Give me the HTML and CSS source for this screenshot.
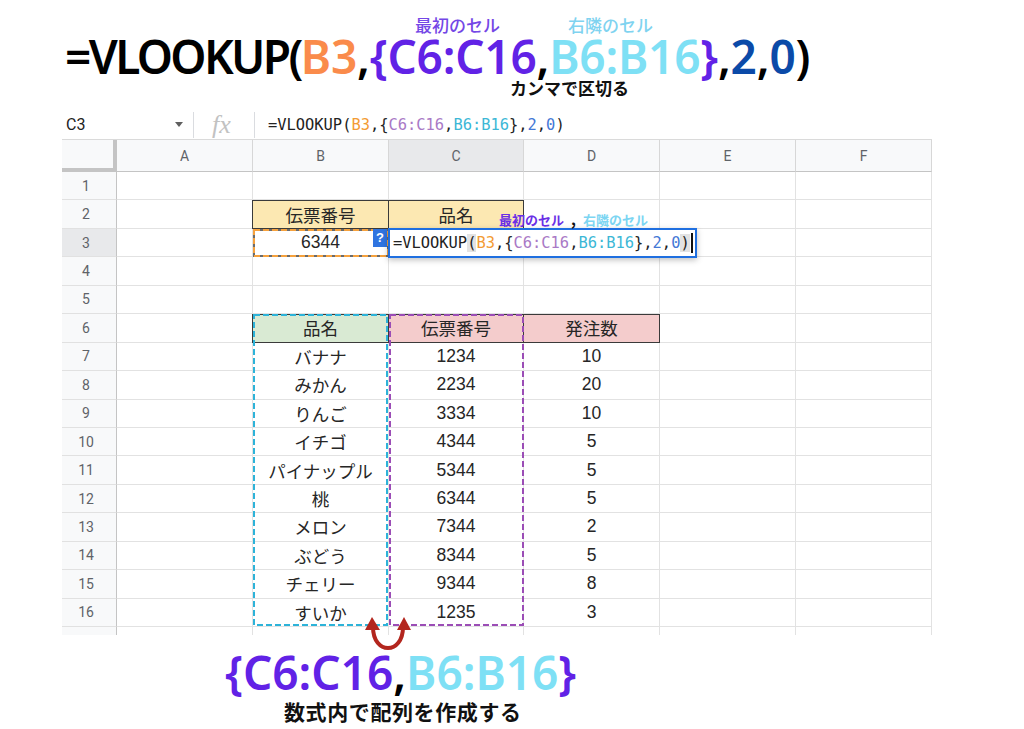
FILE: index.html
```html
<!DOCTYPE html>
<html lang="ja">
<head>
<meta charset="utf-8">
<title>VLOOKUP 配列</title>
<link rel="stylesheet" href="styles.css">
</head>
<body>
<div class="page">
  <header class="hero">
    <div class="notes-top">
      <span class="note note-first">最初のセル</span>
      <span class="note note-right">右隣のセル</span>
    </div>
    <div class="big-formula"><span class="fn">=VLOOKUP(</span><span class="or">B3</span>,<span class="pu">{C6:C16</span>,<span class="cy">B6:B16</span><span class="pu">}</span>,<span class="db">2</span>,<span class="db">0</span>)</div>
    <div class="note note-comma">カンマで区切る</div>
  </header>

  <section class="sheet">
    <div class="fbar">
      <div class="namebox"><span>C3</span><span class="caret"></span></div>
      <div class="vdiv"></div>
      <div class="fx">fx</div>
      <div class="vdiv"></div>
      <div class="ftext">=VLOOKUP(<span class="f-or">B3</span>,{<span class="f-pu">C6:C16</span>,<span class="f-cy">B6:B16</span>},<span class="f-bl">2</span>,<span class="f-bl">0</span>)</div>
    </div>

    <div class="row hrow">
      <div class="corner"></div>
      <div class="ch">A</div><div class="ch">B</div><div class="ch sel">C</div><div class="ch">D</div><div class="ch">E</div><div class="ch">F</div>
    </div>

    <div class="body">
      <div class="row"><div class="rh">1</div><div class="c"></div><div class="c"></div><div class="c"></div><div class="c"></div><div class="c"></div><div class="c"></div></div>
      <div class="row"><div class="rh">2</div><div class="c"></div><div class="c yl">伝票番号</div><div class="c yl">品名</div><div class="c"></div><div class="c"></div><div class="c"></div></div>
      <div class="row"><div class="rh sel">3</div><div class="c"></div><div class="c">6344</div><div class="c"></div><div class="c"></div><div class="c"></div><div class="c"></div></div>
      <div class="row"><div class="rh">4</div><div class="c"></div><div class="c"></div><div class="c"></div><div class="c"></div><div class="c"></div><div class="c"></div></div>
      <div class="row"><div class="rh">5</div><div class="c"></div><div class="c"></div><div class="c"></div><div class="c"></div><div class="c"></div><div class="c"></div></div>
      <div class="row"><div class="rh">6</div><div class="c"></div><div class="c gr">品名</div><div class="c rd">伝票番号</div><div class="c rd">発注数</div><div class="c"></div><div class="c"></div></div>
      <div class="row"><div class="rh">7</div><div class="c"></div><div class="c">バナナ</div><div class="c">1234</div><div class="c">10</div><div class="c"></div><div class="c"></div></div>
      <div class="row"><div class="rh">8</div><div class="c"></div><div class="c">みかん</div><div class="c">2234</div><div class="c">20</div><div class="c"></div><div class="c"></div></div>
      <div class="row"><div class="rh">9</div><div class="c"></div><div class="c">りんご</div><div class="c">3334</div><div class="c">10</div><div class="c"></div><div class="c"></div></div>
      <div class="row"><div class="rh">10</div><div class="c"></div><div class="c">イチゴ</div><div class="c">4344</div><div class="c">5</div><div class="c"></div><div class="c"></div></div>
      <div class="row"><div class="rh">11</div><div class="c"></div><div class="c">パイナップル</div><div class="c">5344</div><div class="c">5</div><div class="c"></div><div class="c"></div></div>
      <div class="row"><div class="rh">12</div><div class="c"></div><div class="c">桃</div><div class="c">6344</div><div class="c">5</div><div class="c"></div><div class="c"></div></div>
      <div class="row"><div class="rh">13</div><div class="c"></div><div class="c">メロン</div><div class="c">7344</div><div class="c">2</div><div class="c"></div><div class="c"></div></div>
      <div class="row"><div class="rh">14</div><div class="c"></div><div class="c">ぶどう</div><div class="c">8344</div><div class="c">5</div><div class="c"></div><div class="c"></div></div>
      <div class="row"><div class="rh">15</div><div class="c"></div><div class="c">チェリー</div><div class="c">9344</div><div class="c">8</div><div class="c"></div><div class="c"></div></div>
      <div class="row"><div class="rh">16</div><div class="c"></div><div class="c">すいか</div><div class="c">1235</div><div class="c">3</div><div class="c"></div><div class="c"></div></div>
      <div class="row"><div class="rh">17</div><div class="c"></div><div class="c"></div><div class="c"></div><div class="c"></div><div class="c"></div><div class="c"></div></div>

      <svg class="marks" width="870" height="463" viewBox="0 0 870 463">
        <rect x="190.5" y="28.5" width="271" height="28" fill="none" stroke="#3a3a3a" stroke-width="1"/>
        <line x1="326.5" y1="28.5" x2="326.5" y2="56.5" stroke="#3a3a3a" stroke-width="1"/>
        <rect x="190.5" y="142.5" width="407" height="28" fill="none" stroke="#3a3a3a" stroke-width="1"/>
        <line x1="326.5" y1="142.5" x2="326.5" y2="170.5" stroke="#3a3a3a" stroke-width="1"/>
        <line x1="461.5" y1="142.5" x2="461.5" y2="170.5" stroke="#3a3a3a" stroke-width="1"/>
        <rect x="192" y="58" width="134" height="26" fill="none" stroke="#6b6b6b" stroke-width="2"/>
        <rect x="192" y="58" width="134" height="26" fill="none" stroke="#f5a13d" stroke-width="2" stroke-dasharray="6 3"/>
        <rect x="192" y="143" width="133" height="310" fill="none" stroke="#2db3d9" stroke-width="2" stroke-dasharray="6 3"/>
        <rect x="328" y="143" width="133" height="310" fill="none" stroke="#9b4db6" stroke-width="2" stroke-dasharray="6 3"/>
      </svg>

      <div class="hint">?</div>
      <div class="editor">=VLOOKUP<span class="paren">(</span><span class="f-or">B3</span>,{<span class="f-pu">C6:C16</span>,<span class="f-cy">B6:B16</span>},<span class="f-bl">2</span>,<span class="f-bl">0</span><span class="paren">)</span><span class="cursor"></span></div>
      <div class="cell-notes"><span class="cn-first">最初のセル</span><span class="cn-comma">,</span><span class="cn-right">右隣のセル</span></div>
    </div>
  </section>

  <svg class="swap-arrow" width="52" height="44" viewBox="0 0 52 44">
    <path d="M11 15 C 11 43, 41 43, 41 15" fill="none" stroke="#b3261e" stroke-width="4"/>
    <polygon points="10,5 3,18 18,18" fill="#b3261e"/>
    <polygon points="42,5 35,18 49,18" fill="#b3261e"/>
  </svg>

  <footer class="foot">
    <div class="foot-formula"><span class="pu">{C6:C16</span>,<span class="cy">B6:B16</span><span class="pu">}</span></div>
    <div class="foot-note">数式内で配列を作成する</div>
  </footer>
</div>
</body>
</html>
```

FILE: styles.css
```css
* { box-sizing: border-box; }
html, body { margin: 0; padding: 0; background: #ffffff; }
body {
  font-family: "Liberation Sans", "Noto Sans CJK JP", sans-serif;
  color: #262626;
}
.page {
  position: relative;
  width: 1024px;
  height: 729px;
  overflow: hidden;
}

/* ---------- title ---------- */
.hero {
  height: 110px;
  padding-top: 14px;
}
.notes-top {
  display: flex;
  gap: 68px;
  height: 22px;
  padding-left: 415px;
}
.note {
  font-family: "Noto Sans CJK JP", sans-serif;
  font-size: 17px;
  line-height: 22px;
  font-weight: 500;
  white-space: nowrap;
}
.note-first { color: #7447e6; }
.note-right { color: #7fd3f0; }
.big-formula {
  margin-left: 65px;
  font-family: "Noto Sans", "Noto Sans CJK JP", sans-serif;
  font-size: 46px;
  line-height: 40px;
  font-weight: 600;
  letter-spacing: -0.2px;
  color: #000;
  white-space: nowrap;
}
.fn { letter-spacing: -2.6px; }
.note-comma {
  margin: 1px 0 0 510px;
  font-weight: 700;
  color: #111;
}
.or { color: #fa8b4b; }
.pu { color: #6122e6; }
.cy { color: #7ee0f5; }
.db { color: #0b4aa8; }

/* ---------- sheet ---------- */
.sheet {
  margin-left: 62px;
  width: 870px;
  height: 525px;
  overflow: hidden;
}
.fbar {
  height: 30px;
  display: flex;
  align-items: center;
  border-bottom: 1px solid #dadada;
}
.namebox {
  width: 131px;
  height: 100%;
  display: flex;
  align-items: center;
  justify-content: space-between;
  padding: 0 10px 0 4px;
  font-family: Roboto, "Liberation Sans", sans-serif;
  font-size: 16px;
  color: #222;
}
.caret {
  width: 0;
  height: 0;
  border-left: 4px solid transparent;
  border-right: 4px solid transparent;
  border-top: 5px solid #5f5f5f;
}
.vdiv {
  width: 1px;
  height: 26px;
  background: #dadce0;
}
.fx {
  width: 60px;
  padding-left: 18px;
  font-family: "Liberation Serif", serif;
  font-style: italic;
  font-size: 26px;
  line-height: 28px;
  color: #c2c2c2;
}
.ftext {
  padding-left: 13px;
  font-family: "DejaVu Sans Mono", "Liberation Mono", monospace;
  font-size: 15.4px;
  color: #222;
  white-space: nowrap;
}
.f-or { color: #f39b34; }
.f-pu { color: #a979c6; }
.f-cy { color: #3cb7d6; }
.f-bl { color: #4478d6; }

.row {
  display: grid;
  grid-template-columns: 55px 136px 136px 135px 136px 136px 136px;
  height: 28.44px;
}
.hrow {
  height: 32px;
  background: #f8f9fa;
}
.corner {
  border-right: 4px solid #c4c4c4;
  border-bottom: 4px solid #c4c4c4;
}
.ch {
  display: flex;
  align-items: center;
  justify-content: center;
  border-right: 1px solid #d7d7d7;
  border-bottom: 1px solid #c4c4c4;
  font-family: Roboto, "Liberation Sans", sans-serif;
  font-size: 14px;
  color: #5f6368;
}
.ch.sel { background: #e8e9eb; }

.body { position: relative; }
.rh {
  display: flex;
  align-items: center;
  justify-content: center;
  padding-right: 6px;
  background: #f8f9fa;
  border-right: 1px solid #c4c4c4;
  border-bottom: 1px solid #e1e1e1;
  font-family: Roboto, "Liberation Sans", sans-serif;
  font-size: 14px;
  color: #5f6368;
}
.rh.sel { background: #e8e9eb; }
.c {
  display: flex;
  align-items: center;
  justify-content: center;
  border-right: 1px solid #e2e2e2;
  border-bottom: 1px solid #e2e2e2;
  font-size: 17.5px;
  color: #262626;
  white-space: nowrap;
}
.yl { background: #fce8b2; }
.gr { background: #d9ead3; }
.rd { background: #f4cccc; }

.marks {
  position: absolute;
  left: 0;
  top: 0;
}
.hint {
  position: absolute;
  left: 311px;
  top: 57px;
  width: 14px;
  height: 18px;
  background: #2f74e0;
  color: #fff;
  font-weight: 700;
  font-size: 13px;
  line-height: 18px;
  text-align: center;
}
.editor {
  position: absolute;
  left: 326px;
  top: 56px;
  width: 309px;
  height: 30px;
  padding-left: 3px;
  display: flex;
  align-items: center;
  background: #fff;
  border: 2px solid #1f6fe0;
  box-shadow: 0 2px 6px rgba(0, 0, 0, 0.25);
  font-family: "DejaVu Sans Mono", "Liberation Mono", monospace;
  font-size: 15.4px;
  color: #222;
  white-space: nowrap;
}
.paren { background: #e3e3e3; }
.cursor {
  display: inline-block;
  width: 2px;
  height: 20px;
  margin-left: 1px;
  background: #111;
}
.cell-notes {
  position: absolute;
  left: 437px;
  top: 39px;
  display: flex;
  align-items: baseline;
  gap: 4px;
  font-family: "Noto Sans CJK JP", sans-serif;
  font-size: 13px;
  line-height: 16px;
  font-weight: 700;
  white-space: nowrap;
}
.cn-first { color: #6a2fe6; }
.cn-comma { color: #111; font-size: 15px; padding: 0 3px; }
.cn-right { color: #7cd5f2; }

/* ---------- arrow + footer ---------- */
.swap-arrow {
  position: absolute;
  left: 362px;
  top: 612px;
}
.foot {
  padding-top: 14px;
}
.foot-formula {
  padding-left: 225px;
  font-family: "Noto Sans", "Noto Sans CJK JP", sans-serif;
  font-size: 46px;
  line-height: 46px;
  font-weight: 600;
  color: #000;
  white-space: nowrap;
}
.foot-note {
  margin-top: 3px;
  padding-left: 284px;
  font-family: "Noto Sans CJK JP", sans-serif;
  font-size: 21px;
  line-height: 26px;
  font-weight: 700;
  letter-spacing: 0.6px;
  color: #111;
  white-space: nowrap;
}
```
